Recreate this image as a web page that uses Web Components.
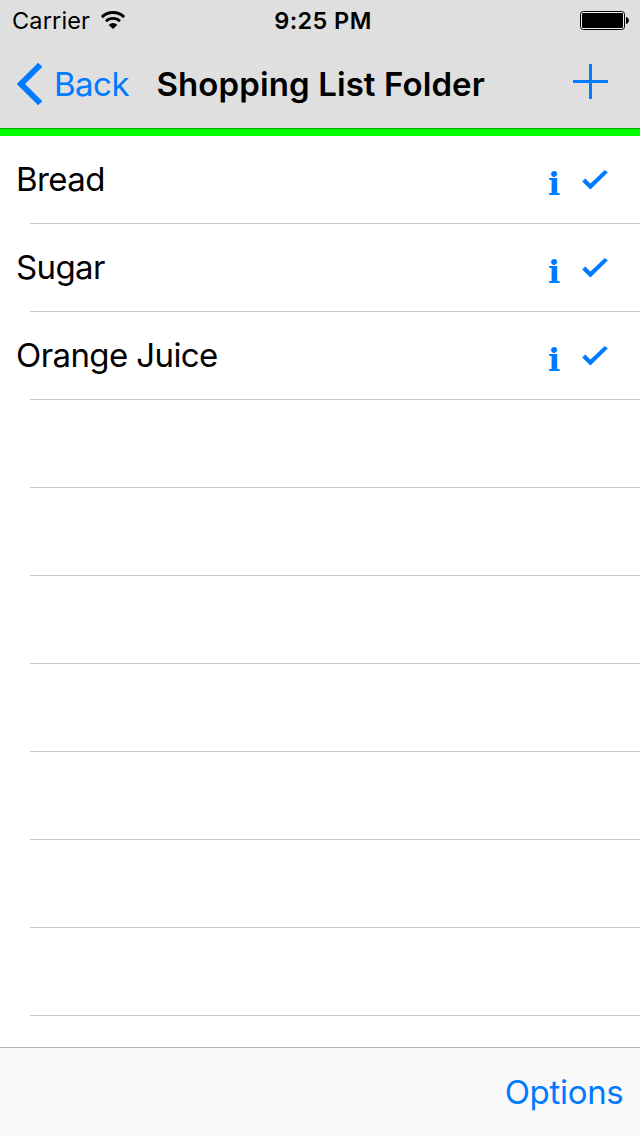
<!DOCTYPE html>
<html lang="en">
<head>
<meta charset="utf-8">
<title>Shopping List Folder</title>
<style>
:root {
    --tint: #007aff;
    --bar: #dfdfdf;
    --separator: #c8c7cc;
}

body {
    margin: 0;
    background: #fff;
    font-family: Inter, "Liberation Sans", sans-serif;
    color: #000;
}
</style>
</head>
<body>
<app-screen>
    <status-bar slot="top" carrier="Carrier" time="9:25 PM"></status-bar>
    <nav-bar slot="top" back="Back">Shopping List Folder</nav-bar>
    <list-row>Bread</list-row>
    <list-row>Sugar</list-row>
    <list-row>Orange Juice</list-row>
    <list-row empty></list-row>
    <list-row empty></list-row>
    <list-row empty></list-row>
    <list-row empty></list-row>
    <list-row empty></list-row>
    <list-row empty></list-row>
    <list-row empty></list-row>
    <tool-bar slot="bottom">Options</tool-bar>
</app-screen>

<script>
class AppScreen extends HTMLElement {
    constructor(){
        super();
        this.shadowDOM = this.attachShadow({mode: "open"});
    }

    connectedCallback(){
        this.shadowDOM.innerHTML = `
            <style>
            :host {
                display: flex;
                flex-direction: column;
                width: 640px;
                height: 1136px;
                overflow: hidden;
            }

            main {
                flex: 1;
                min-height: 0;
                overflow: hidden;
            }
            </style>
            <slot name="top"></slot>
            <main><slot></slot></main>
            <slot name="bottom"></slot>
        `;
    }
}

class StatusBar extends HTMLElement {
    constructor(){
        super();
        this.shadowDOM = this.attachShadow({mode: "open"});
    }

    connectedCallback(){
        this.shadowDOM.innerHTML = `
            <style>
            :host {
                display: grid;
                grid-template-columns: 1fr auto 1fr;
                height: 40px;
                padding: 0 11px 0 12px;
                box-sizing: border-box;
                background: var(--bar);
                font-size: 23.5px;
                line-height: 42px;
            }

            .left {
                display: flex;
                gap: 9.5px;
                letter-spacing: 0.15px;
            }

            .time {
                padding-left: 5px;
                font-weight: 600;
                letter-spacing: 0.4px;
            }

            .battery {
                justify-self: end;
            }

            svg {
                display: block;
            }
            </style>
            <div class="left">
                <span>${this.getAttribute("carrier")}</span>
                <svg width="26" height="40" viewBox="0 0 26 40">
                    <path d="M1.9 17.1A15.8 15.8 0 0 1 24.1 17.1" fill="none" stroke="#000" stroke-width="3"/>
                    <path d="M6 21.2A10 10 0 0 1 20 21.2" fill="none" stroke="#000" stroke-width="2.8"/>
                    <path d="M13 29.1L8.7 24.9A5.8 5.8 0 0 1 17.3 24.9Z"/>
                </svg>
            </div>
            <span class="time">${this.getAttribute("time")}</span>
            <svg class="battery" width="49" height="40" viewBox="0 0 49 40">
                <rect x="0.5" y="11.5" width="44" height="18" rx="2.8" fill="#efefef" stroke="#000"/>
                <rect x="2" y="13" width="41" height="15" rx="1"/>
                <path d="M46 17C49.8 17.6 49.8 23.4 46 24Z"/>
            </svg>
        `;
    }
}

class NavBar extends HTMLElement {
    constructor(){
        super();
        this.shadowDOM = this.attachShadow({mode: "open"});
    }

    connectedCallback(){
        this.shadowDOM.innerHTML = `
            <style>
            :host {
                display: flex;
                height: 96px;
                box-sizing: border-box;
                padding: 0 32px 0 17px;
                background: var(--bar);
                border-bottom: 7px solid #00ff00;
                box-shadow: inset 0 -1px #00a800;
                font-size: 33px;
                line-height: 88px;
            }

            .back {
                display: flex;
                gap: 11px;
                width: 139.5px;
                color: var(--tint);
                letter-spacing: -0.5px;
            }

            .title {
                flex: 1;
                font-weight: 600;
                white-space: nowrap;
                letter-spacing: 0.1px;
            }

            svg {
                display: block;
                fill: var(--tint);
            }
            </style>
            <div class="back">
                <svg width="26" height="88" viewBox="0 0 26 88">
                    <path d="M21.2 22.8L25.4 26.8L8 44L25.4 61.2L21.2 65.2L-0.2 44Z"/>
                </svg>
                <span>${this.getAttribute("back")}</span>
            </div>
            <div class="title"><slot></slot></div>
            <svg width="35" height="88" viewBox="0 0 35 88">
                <path d="M0 40H16V24H19V40H35V43H19V59H16V43H0Z"/>
            </svg>
        `;
    }
}

class ListRow extends HTMLElement {
    constructor(){
        super();
        this.shadowDOM = this.attachShadow({mode: "open"});
    }

    connectedCallback(){
        const icons = `
            <span class="info">i</span>
            <svg width="26" height="88" viewBox="0 0 26 88">
                <path d="M0.2 45.4L3.2 42.4L8.4 47.6L22.8 34L25.8 36.6L8.4 53.6Z"/>
            </svg>
        `;

        this.shadowDOM.innerHTML = `
            <style>
            :host {
                display: flex;
                height: 88px;
                box-sizing: border-box;
                padding: 0 32px 0 16px;
                background: linear-gradient(var(--separator), var(--separator)) 30px 87px / 610px 1px no-repeat;
                font-size: 33px;
                line-height: 87px;
            }

            .label {
                flex: 1;
                letter-spacing: -0.6px;
            }

            .info {
                width: 34px;
                color: var(--tint);
                font: bold 32px/96px "DejaVu Serif", serif;
            }

            svg {
                display: block;
                fill: var(--tint);
            }
            </style>
            <div class="label"><slot></slot></div>
            ${this.hasAttribute("empty") ? "" : icons}
        `;
    }
}

class ToolBar extends HTMLElement {
    constructor(){
        super();
        this.shadowDOM = this.attachShadow({mode: "open"});
    }

    connectedCallback(){
        this.shadowDOM.innerHTML = `
            <style>
            :host {
                display: flex;
                justify-content: flex-end;
                height: 89px;
                box-sizing: border-box;
                padding-right: 16.5px;
                border-top: 1px solid #b2b2b2;
                background: #f9f9f9;
                color: var(--tint);
                font-size: 33px;
                line-height: 88px;
                letter-spacing: -0.3px;
            }
            </style>
            <slot></slot>
        `;
    }
}

customElements.define("app-screen", AppScreen);
customElements.define("status-bar", StatusBar);
customElements.define("nav-bar", NavBar);
customElements.define("list-row", ListRow);
customElements.define("tool-bar", ToolBar);
</script>
</body>
</html>
